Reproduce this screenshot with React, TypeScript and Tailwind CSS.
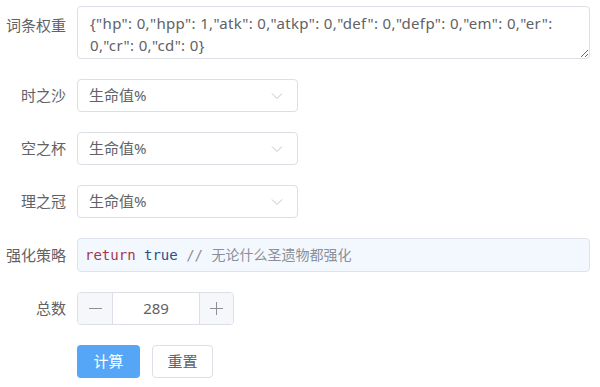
import { useState } from 'react';

const font = { fontFamily: '"Noto Sans", "Noto Sans CJK SC", sans-serif' };

function Row({ label, children, top = false }: { label: string; children: React.ReactNode; top?: boolean }) {
  return (
    <div className={`flex ${top ? 'items-start' : 'items-center'}`}>
      <label className={`w-[66px] shrink-0 text-right text-[15px] text-[#606266] ${top ? 'pt-[8px]' : ''}`}>{label}</label>
      <div className="ml-[11px] flex-1">{children}</div>
    </div>
  );
}

function Chevron() {
  return (
    <svg width="12" height="8" viewBox="0 0 12 8" fill="none" stroke="#c0c4cc" strokeWidth="1">
      <path d="M1 1.5 L6 6.5 L11 1.5" />
    </svg>
  );
}

function Select({ value }: { value: string }) {
  return (
    <div className="flex h-[33px] w-[221px] items-center justify-between rounded-[4px] border border-[#dcdfe6] bg-white pl-[11px] pr-[14px] text-[15px] text-[#606266]">
      <span>{value}</span>
      <Chevron />
    </div>
  );
}

export default function App() {
  const [weights, setWeights] = useState(
    '{"hp": 0,"hpp": 1,"atk": 0,"atkp": 0,"def": 0,"defp": 0,"em": 0,"er": 0,"cr": 0,"cd": 0}'
  );
  const [total, setTotal] = useState(289);

  return (
    <div className="min-h-screen bg-white pr-[10px] pt-[6px]" style={font}>
      <div className="flex flex-col gap-[20px]">
        <Row label="词条权重" top>
          <textarea
            value={weights}
            onChange={(e) => setWeights(e.target.value)}
            className="block h-[53px] w-full rounded-[4px] border border-[#dcdfe6] px-[12px] py-[5px] text-[15px] leading-[22px] tracking-[0.35px] text-[#606266] outline-none"
            style={font}
          />
        </Row>

        <Row label="时之沙">
          <Select value="生命值%" />
        </Row>
        <Row label="空之杯">
          <Select value="生命值%" />
        </Row>
        <Row label="理之冠">
          <Select value="生命值%" />
        </Row>

        <Row label="强化策略">
          <div className="flex h-[34px] items-center rounded-[4px] border border-[#dfe4ea] bg-[#f3f8fe] px-[7px]">
            <span style={{ fontFamily: '"DejaVu Sans Mono", "Noto Sans CJK SC", monospace' }} className="text-[14px]">
              <span className="text-[#a3364e]">return</span>{' '}
              <span className="text-[#2c4f8c]">true</span>{' '}
              <span className="text-[#8a8f99]">// 无论什么圣遗物都强化</span>
            </span>
          </div>
        </Row>

        <Row label="总数">
          <div className="flex h-[33px] w-[157px] overflow-hidden rounded-[4px] border border-[#dcdfe6] text-[15px] text-[#606266]">
            <button
              onClick={() => setTotal(total - 1)}
              className="flex w-[35px] items-center justify-center border-r border-[#dcdfe6] bg-[#f5f7fa] text-[#8c8f96]"
            >
              <svg width="13" height="13" viewBox="0 0 13 13" stroke="currentColor" strokeWidth="1">
                <path d="M0 6.5 H13" />
              </svg>
            </button>
            <div className="flex flex-1 items-center justify-center bg-white">{total}</div>
            <button
              onClick={() => setTotal(total + 1)}
              className="flex w-[34px] items-center justify-center border-l border-[#dcdfe6] bg-[#f5f7fa] text-[#8c8f96]"
            >
              <svg width="13" height="13" viewBox="0 0 13 13" stroke="currentColor" strokeWidth="1">
                <path d="M0 6.5 H13 M6.5 0 V13" />
              </svg>
            </button>
          </div>
        </Row>

        <div className="flex gap-[12px] pl-[77px]">
          <button className="h-[33px] w-[63px] rounded-[4px] bg-[#56a6f7] text-[15px] text-white">计算</button>
          <button className="h-[33px] w-[61px] rounded-[4px] border border-[#dcdfe6] bg-white text-[15px] text-[#606266]">重置</button>
        </div>
      </div>
    </div>
  );
}
